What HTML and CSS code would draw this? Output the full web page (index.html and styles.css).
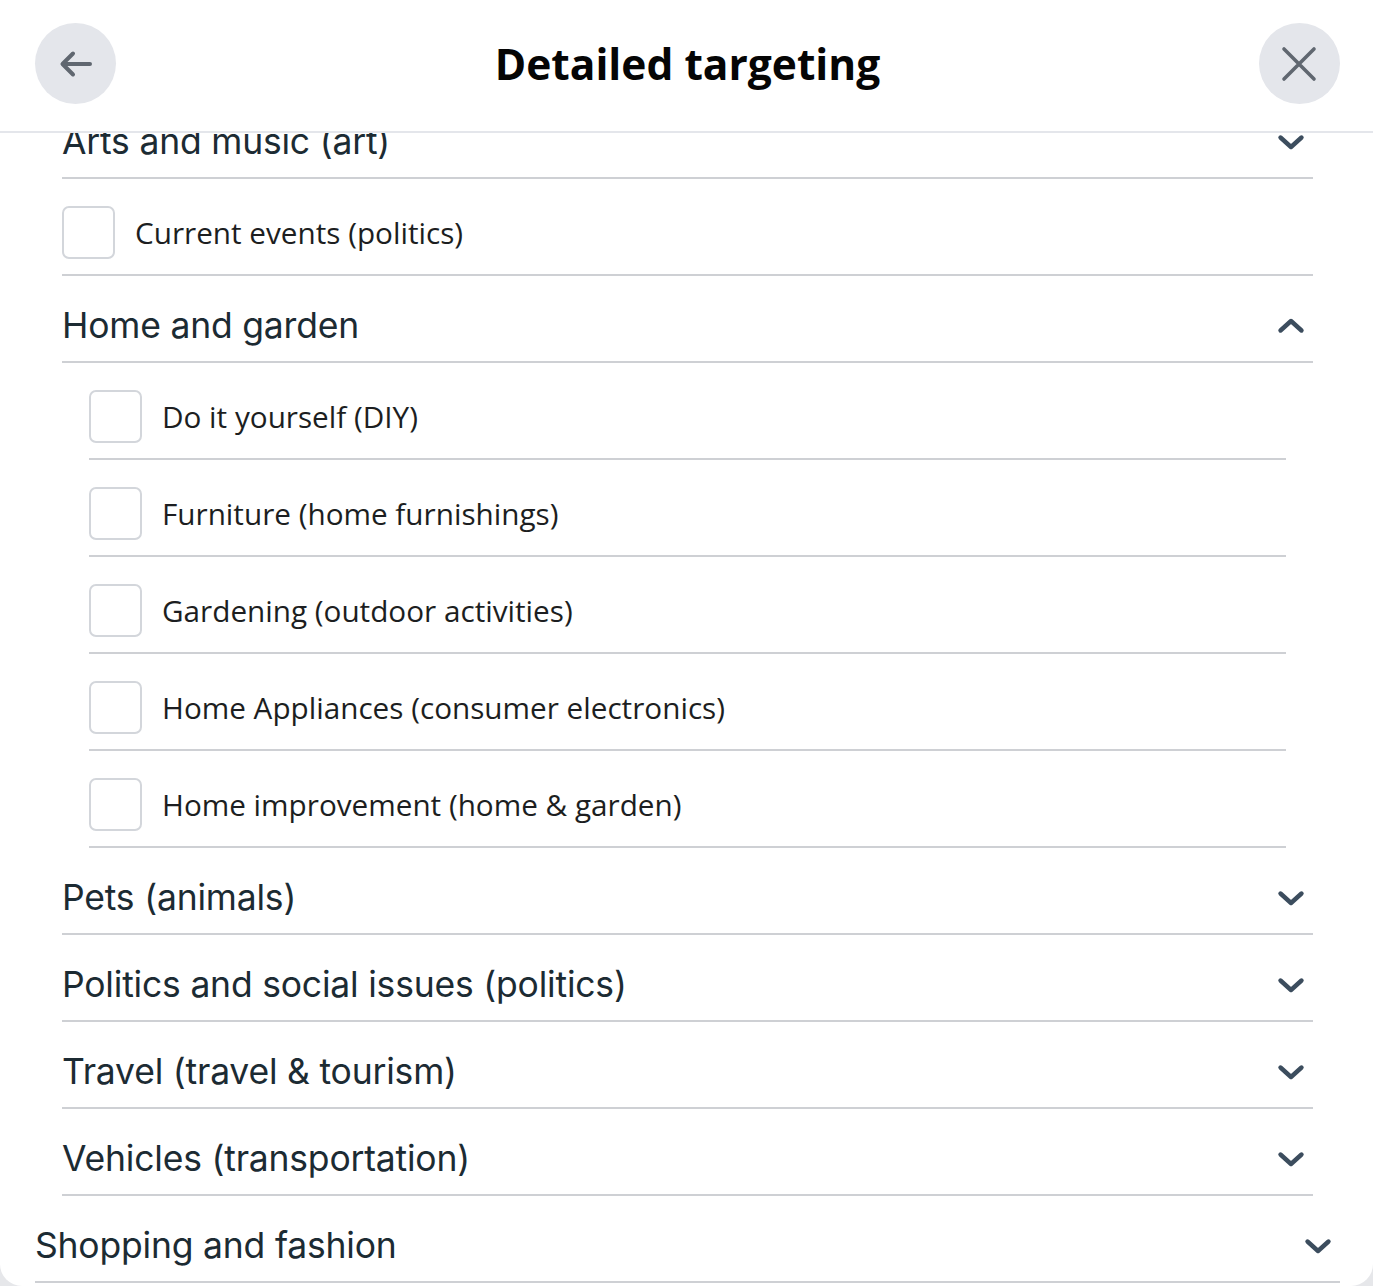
FILE: index.html
```html
<!DOCTYPE html>
<html lang="en">
<head>
<meta charset="utf-8">
<title>Detailed targeting</title>
<link rel="stylesheet" href="styles.css">
</head>
<body>
<div class="dialog">
  <header class="dialog-header">
    <button class="round-btn" aria-label="Back">
      <svg width="40" height="40" viewBox="0 0 40 40"><path d="M34 20H7M17 9.5L6.5 20 17 30.5" fill="none" stroke="#606770" stroke-width="4" stroke-linecap="round" stroke-linejoin="round"/></svg>
    </button>
    <h1 class="title">Detailed targeting</h1>
    <button class="round-btn" aria-label="Close">
      <svg width="40" height="40" viewBox="0 0 40 40"><path d="M5 5L35 35M35 5L5 35" fill="none" stroke="#606770" stroke-width="3.6" stroke-linecap="round"/></svg>
    </button>
  </header>
  <div class="viewport">
    <div class="list">
      <div class="level level-2">
        <div class="group-row">
          <span class="group-label">Arts and music (art)</span>
          <svg class="chev" width="28" height="18" viewBox="0 0 28 18"><path d="M3.5 4.5l10.5 9.5 10.5-9.5" fill="none" stroke="#3c4d5e" stroke-width="4.4" stroke-linecap="round" stroke-linejoin="round"/></svg>
        </div>
        <label class="check-row">
          <span class="box"></span>
          <span class="check-label">Current events (politics)</span>
        </label>
        <div class="group-row">
          <span class="group-label">Home and garden</span>
          <svg class="chev" width="28" height="18" viewBox="0 0 28 18"><path d="M3.5 13.5l10.5-9.5 10.5 9.5" fill="none" stroke="#3c4d5e" stroke-width="4.4" stroke-linecap="round" stroke-linejoin="round"/></svg>
        </div>
        <div class="level level-3">
          <label class="check-row"><span class="box"></span><span class="check-label">Do it yourself (DIY)</span></label>
          <label class="check-row"><span class="box"></span><span class="check-label">Furniture (home furnishings)</span></label>
          <label class="check-row"><span class="box"></span><span class="check-label">Gardening (outdoor activities)</span></label>
          <label class="check-row"><span class="box"></span><span class="check-label">Home Appliances (consumer electronics)</span></label>
          <label class="check-row"><span class="box"></span><span class="check-label">Home improvement (home &amp; garden)</span></label>
        </div>
        <div class="group-row">
          <span class="group-label">Pets (animals)</span>
          <svg class="chev" width="28" height="18" viewBox="0 0 28 18"><path d="M3.5 4.5l10.5 9.5 10.5-9.5" fill="none" stroke="#3c4d5e" stroke-width="4.4" stroke-linecap="round" stroke-linejoin="round"/></svg>
        </div>
        <div class="group-row">
          <span class="group-label">Politics and social issues (politics)</span>
          <svg class="chev" width="28" height="18" viewBox="0 0 28 18"><path d="M3.5 4.5l10.5 9.5 10.5-9.5" fill="none" stroke="#3c4d5e" stroke-width="4.4" stroke-linecap="round" stroke-linejoin="round"/></svg>
        </div>
        <div class="group-row">
          <span class="group-label">Travel (travel &amp; tourism)</span>
          <svg class="chev" width="28" height="18" viewBox="0 0 28 18"><path d="M3.5 4.5l10.5 9.5 10.5-9.5" fill="none" stroke="#3c4d5e" stroke-width="4.4" stroke-linecap="round" stroke-linejoin="round"/></svg>
        </div>
        <div class="group-row">
          <span class="group-label">Vehicles (transportation)</span>
          <svg class="chev" width="28" height="18" viewBox="0 0 28 18"><path d="M3.5 4.5l10.5 9.5 10.5-9.5" fill="none" stroke="#3c4d5e" stroke-width="4.4" stroke-linecap="round" stroke-linejoin="round"/></svg>
        </div>
      </div>
      <div class="level level-1">
        <div class="group-row">
          <span class="group-label">Shopping and fashion</span>
          <svg class="chev" width="28" height="18" viewBox="0 0 28 18"><path d="M3.5 4.5l10.5 9.5 10.5-9.5" fill="none" stroke="#3c4d5e" stroke-width="4.4" stroke-linecap="round" stroke-linejoin="round"/></svg>
        </div>
      </div>
    </div>
  </div>
</div>
</body>
</html>
```

FILE: styles.css
```css
* { box-sizing: border-box; }

html, body {
  margin: 0;
  padding: 0;
  background: #e6e7ea;
}

.dialog {
  width: 1373px;
  height: 1286px;
  background: #ffffff;
  border-radius: 0 0 22px 22px;
  display: flex;
  flex-direction: column;
  overflow: hidden;
}

.dialog-header {
  height: 133px;
  flex: none;
  display: flex;
  align-items: center;
  justify-content: space-between;
  padding: 0 33px 4px 35px;
  border-bottom: 2px solid #e4e6eb;
  position: relative;
  z-index: 1;
  background: #fff;
}

.round-btn {
  width: 81px;
  height: 81px;
  border-radius: 50%;
  border: none;
  background: #e4e6eb;
  display: flex;
  align-items: center;
  justify-content: center;
  padding: 0;
}

.title {
  margin: 0;
  font-family: "Open Sans", "Noto Sans", sans-serif;
  font-weight: 700;
  font-size: 42.5px;
  color: #050505;
  letter-spacing: 0;
}

.viewport {
  flex: 1;
  overflow: hidden;
}

.list {
  margin-top: -41px;
  padding: 0 33px 0 35px;
}

.level-2 {
  padding: 0 27px;
}

.level-3 {
  padding: 0 27px;
}

.group-row {
  height: 87px;
  display: flex;
  align-items: center;
  justify-content: space-between;
  padding-top: 14px;
  border-bottom: 2px solid #ced0d4;
}

.group-label {
  font-family: "Inter", "Roboto", sans-serif;
  font-size: 35.5px;
  color: #1c2b33;
  letter-spacing: -0.2px;
}

.chev {
  margin-right: 8px;
}

.check-row {
  height: 97px;
  display: flex;
  align-items: center;
  gap: 20px;
  padding-top: 12px;
  border-bottom: 2px solid #ced0d4;
}

.box {
  width: 53px;
  height: 53px;
  border: 2px solid #d3d6db;
  border-radius: 7px;
  flex: none;
}

.check-label {
  font-family: "Open Sans", "Noto Sans", sans-serif;
  font-size: 29.7px;
  color: #1c1e21;
}
```
